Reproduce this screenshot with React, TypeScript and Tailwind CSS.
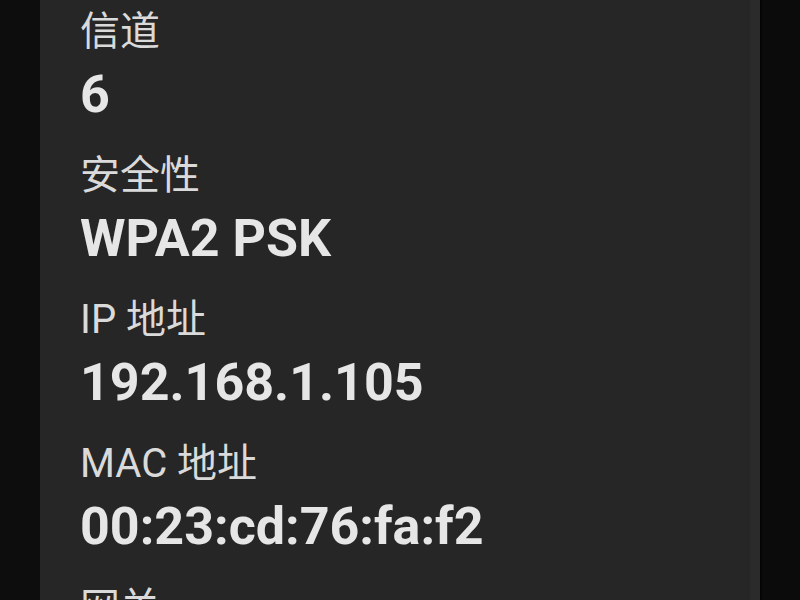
const rows = [
  { label: "信道", value: "6" },
  { label: "安全性", value: "WPA2 PSK" },
  { label: "IP 地址", value: "192.168.1.105" },
  { label: "MAC 地址", value: "00:23:cd:76:fa:f2" },
  { label: "网关", value: "192.168.1.1" },
];

export default function App() {
  return (
    <div
      className="flex h-[600px] w-[800px] overflow-hidden bg-[#0b0b0b]"
      style={{ fontFamily: 'Roboto, "Noto Sans CJK SC", sans-serif' }}
    >
      <div className="w-[40px] shrink-0 bg-[#0d0d0d]" />

      {/* details panel */}
      <div className="flex w-[720px] shrink-0 bg-[#262626]">
        <div className="flex-1 pl-[40px] pt-[4px]">
          {rows.map((row) => (
            <div key={row.label} className="pb-[18px]">
              <div className="text-[40px] leading-[56px] text-[#dadada]">
                {row.label}
              </div>
              <div className="text-[52px] font-bold leading-[70px] text-[#e6e6e6]">
                {row.value}
              </div>
            </div>
          ))}
        </div>
        <div className="w-[10px] bg-[#2b2b2b]" />
      </div>

      <div className="w-[2px] bg-[#050505]" />
      <div className="flex-1 bg-[#0b0b0b]" />
    </div>
  );
}
